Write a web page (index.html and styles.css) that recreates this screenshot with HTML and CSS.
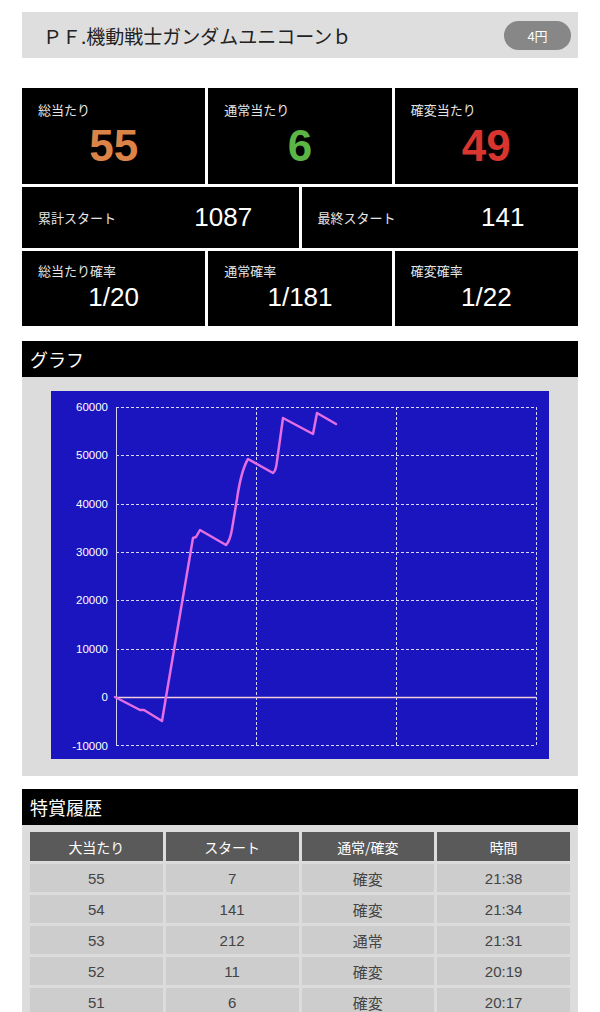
FILE: index.html
```html
<!DOCTYPE html>
<html lang="ja">
<head>
    <meta charset="UTF-8">
    <meta name="viewport" content="width=device-width, initial-scale=1.0">
    <title>データ</title>
    <link rel="stylesheet" href="styles.css">
</head>
<body>
    <div class="page">
        <div class="title-bar">
            <span class="title">ＰＦ.機動戦士ガンダムユニコーンｂ</span>
            <span class="rate">4円</span>
        </div>

        <div class="stats">
            <div class="stat-row three">
                <div class="stat big">
                    <div class="label">総当たり</div>
                    <div class="num orange">55</div>
                </div>
                <div class="stat big">
                    <div class="label">通常当たり</div>
                    <div class="num green">6</div>
                </div>
                <div class="stat big">
                    <div class="label">確変当たり</div>
                    <div class="num red">49</div>
                </div>
            </div>
            <div class="stat-row two">
                <div class="stat inline">
                    <div class="label">累計スタート</div>
                    <div class="val">1087</div>
                </div>
                <div class="stat inline">
                    <div class="label">最終スタート</div>
                    <div class="val">141</div>
                </div>
            </div>
            <div class="stat-row three">
                <div class="stat prob">
                    <div class="label">総当たり確率</div>
                    <div class="val">1/20</div>
                </div>
                <div class="stat prob">
                    <div class="label">通常確率</div>
                    <div class="val">1/181</div>
                </div>
                <div class="stat prob">
                    <div class="label">確変確率</div>
                    <div class="val">1/22</div>
                </div>
            </div>
        </div>

        <section class="block">
            <h2 class="sec-head">グラフ</h2>
            <div class="graph-body">
                <svg class="chart" width="498" height="368" viewBox="0 0 498 368">
                    <rect x="0" y="0" width="498" height="368" fill="#1a15bf"/>
                    <!-- 横の目盛り線 -->
                    <g stroke="#d8d8ff" stroke-width="1" stroke-dasharray="3 2" fill="none">
                        <line x1="65" y1="16.5" x2="485" y2="16.5"/>
                        <line x1="65" y1="64.5" x2="485" y2="64.5"/>
                        <line x1="65" y1="113.5" x2="485" y2="113.5"/>
                        <line x1="65" y1="161.5" x2="485" y2="161.5"/>
                        <line x1="65" y1="209.5" x2="485" y2="209.5"/>
                        <line x1="65" y1="258.5" x2="485" y2="258.5"/>
                        <line x1="65" y1="354.5" x2="485" y2="354.5"/>
                        <line x1="205.5" y1="16" x2="205.5" y2="355"/>
                        <line x1="345.5" y1="16" x2="345.5" y2="355"/>
                        <line x1="485.5" y1="16" x2="485.5" y2="355"/>
                    </g>
                    <line x1="65.5" y1="16" x2="65.5" y2="355" stroke="#d0d0f0" stroke-width="1"/>
                    <line x1="65" y1="306.5" x2="485" y2="306.5" stroke="#f2cfd8" stroke-width="1.5"/>
                    <g fill="#ffffff" font-size="11.5" text-anchor="end" font-family="Liberation Sans, Arial, sans-serif">
                        <text x="57" y="20">60000</text>
                        <text x="57" y="68">50000</text>
                        <text x="57" y="117">40000</text>
                        <text x="57" y="165">30000</text>
                        <text x="57" y="213">20000</text>
                        <text x="57" y="262">10000</text>
                        <text x="57" y="310">0</text>
                        <text x="57" y="359">-10000</text>
                    </g>
                    <path fill="none" stroke="#e46ee2" stroke-width="2.5" stroke-linejoin="round" stroke-linecap="round"
                        d="M64,306 L89,319 L93,319 L111,330 L115,306 L142,147 L145,146 L149,139 L175,154 Q179,150 181,138 L186,108 Q190,80 197,68 L222,82 Q225,80 226,70 L232,27 L262,43 L266,22 L285,33"/>
                </svg>
            </div>
        </section>

        <section class="block history-block">
            <h2 class="sec-head">特賞履歴</h2>
            <div class="history-body">
                <table class="history">
                    <thead>
                        <tr><th>大当たり</th><th>スタート</th><th>通常/確変</th><th>時間</th></tr>
                    </thead>
                    <tbody>
                        <tr><td>55</td><td>7</td><td>確変</td><td>21:38</td></tr>
                        <tr><td>54</td><td>141</td><td>確変</td><td>21:34</td></tr>
                        <tr><td>53</td><td>212</td><td>通常</td><td>21:31</td></tr>
                        <tr><td>52</td><td>11</td><td>確変</td><td>20:19</td></tr>
                        <tr><td>51</td><td>6</td><td>確変</td><td>20:17</td></tr>
                    </tbody>
                </table>
            </div>
        </section>
    </div>
</body>
</html>
```

FILE: styles.css
```css
body {
    margin: 0;
    background: #fff;
    font-family: "Liberation Sans", "Noto Sans CJK JP", sans-serif;
}
.page {
    padding: 12px 22px 0;
}
.title-bar {
    height: 46px;
    background: #dedede;
    display: flex;
    align-items: center;
    justify-content: space-between;
    padding: 0 7px 0 21px;
}
.title {
    font-family: "Noto Sans CJK JP", sans-serif;
    font-size: 19px;
    color: #222;
}
.rate {
    width: 67px;
    height: 29px;
    border-radius: 15px;
    background: #878787;
    color: #fff;
    font-size: 13px;
    display: flex;
    align-items: center;
    justify-content: center;
}

/* 集計 */
.stats {
    margin-top: 30px;
    display: flex;
    flex-direction: column;
    gap: 3px;
}
.stat-row {
    display: grid;
    gap: 3px;
}
.stat-row.three {
    grid-template-columns: 1fr 1fr 1fr;
}
.stat-row.two {
    grid-template-columns: 1fr 1fr;
    height: 61px;
}
.stat {
    background: #000;
    color: #fff;
}
.label {
    font-family: "Noto Sans CJK JP", sans-serif;
    font-size: 13px;
    line-height: 16px;
    color: #e6e6e6;
}
.stat.big {
    height: 96px;
    padding: 14px 0 0 16px;
    box-sizing: border-box;
}
.num {
    font-size: 44px;
    font-weight: bold;
    line-height: 44px;
    text-align: center;
    margin: 6px 0 0 -16px;
}
.orange { color: #dc8447; }
.green { color: #5bb646; }
.red { color: #d8352f; }

.stat.inline {
    display: flex;
    align-items: center;
    padding-left: 16px;
}
.stat.inline .label {
    flex: 0 0 110px;
}
.stat.inline .val {
    flex: 1;
    text-align: center;
}
.val {
    font-size: 26px;
    color: #fff;
}
.stat.prob {
    height: 75px;
    padding: 12px 0 0 16px;
    box-sizing: border-box;
}
.stat.prob .val {
    line-height: 32px;
    text-align: center;
    margin: 2px 0 0 -16px;
}

/* セクション */
.block {
    margin-top: 15px;
}
.history-block {
    margin-top: 13px;
}
.sec-head {
    margin: 0;
    height: 36px;
    line-height: 36px;
    background: #000;
    color: #fff;
    font-family: "Noto Sans CJK JP", sans-serif;
    font-weight: normal;
    font-size: 18px;
    padding-left: 8px;
}
.graph-body {
    background: #dcdcdc;
    padding: 14px 29px 17px;
}
.chart {
    display: block;
}
.history-body {
    background: #dcdcdc;
    padding: 4px 5px 10px;
}
.history {
    width: 100%;
    border-spacing: 3px;
    table-layout: fixed;
}
.history th {
    background: #5a5a5a;
    color: #fff;
    font-family: "Noto Sans CJK JP", sans-serif;
    font-weight: normal;
    font-size: 14px;
    height: 29px;
    padding: 0;
}
.history td {
    background: #cdcdcd;
    color: #444;
    font-size: 15px;
    text-align: center;
    height: 28px;
    padding: 0;
}
```
